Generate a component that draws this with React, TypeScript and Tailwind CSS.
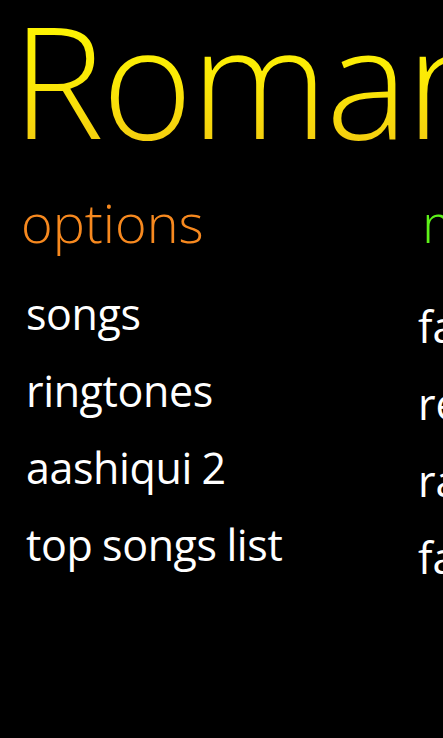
import React from "react";

const font = { fontFamily: '"Open Sans", "Noto Sans", sans-serif' };

export default function App() {
  const left = ["songs", "ringtones", "aashiqui 2", "top songs list"];
  const right = ["favourites", "recent", "rate & review", "facebook"];
  return (
    <div
      className="w-[443px] h-[738px] bg-black overflow-hidden text-white"
      style={font}
    >
      <div className="pl-[12px] mt-[1px] whitespace-nowrap">
        <span className="text-[155px] leading-[155px] font-light bg-gradient-to-b from-[#ffff00] via-[#fbe906] to-[#efbd12] bg-clip-text text-transparent tracking-[-2px]">
          Romantic Songs
        </span>
      </div>
      <div className="flex mt-[38px] whitespace-nowrap">
        <div className="w-[400px] shrink-0">
          <div className="pl-[21px] text-[54px] leading-[56px] font-light text-[#f7891f]">
            options
          </div>
          <div className="mt-[25px] flex flex-col">
            {left.map((t) => (
              <div
                key={t}
                className="pl-[26px] text-[43px] leading-[77px] tracking-[-0.4px] [word-spacing:-1px]"
              >
                {t}
              </div>
            ))}
          </div>
        </div>
        <div className="shrink-0">
          <div className="pl-[22px] text-[54px] leading-[56px] font-light text-[#5ef21a]">
            more
          </div>
          <div className="mt-[38px] flex flex-col">
            {right.map((t) => (
              <div key={t} className="pl-[18px] text-[43px] leading-[77px]">
                {t}
              </div>
            ))}
          </div>
        </div>
      </div>
    </div>
  );
}
